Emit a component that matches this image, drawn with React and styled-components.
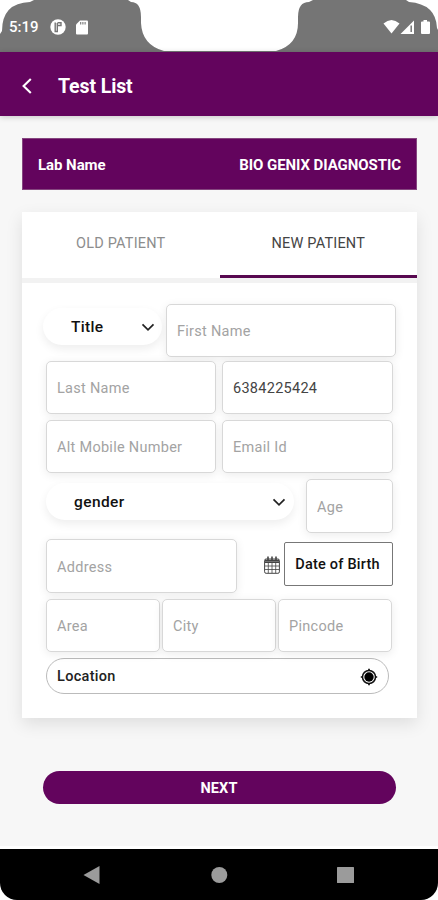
import styled, { createGlobalStyle } from "styled-components";

export default function App() {
  return (
    <>
      <GlobalStyle />
      <Phone>
        <StatusBar>
          <Clock>5:19</Clock>
          <PausedIcon />
          <CardIcon />
          <Signals />
        </StatusBar>
        <Header>
          <BackIcon />
          <Title>Test List</Title>
        </Header>
        <Content>
          <LabBar>
            <LabLabel>Lab Name</LabLabel>
            <LabValue>BIO GENIX DIAGNOSTIC</LabValue>
          </LabBar>
          <Card>
            <Tabs>
              <Tab>OLD PATIENT</Tab>
              <Tab $active>NEW PATIENT</Tab>
            </Tabs>
            <Form>
              <Row $height={53} $indent={-3}>
                <Select $width={119} $height={37} $pad={28} $end={7}>
                  <SelectText $spacing={0.3}>Title</SelectText>
                  <Chevron />
                </Select>
                <Field $width={230} $gap={4} placeholder="First Name" />
              </Row>
              <Row $height={53} $top={4}>
                <Field $width={170} placeholder="Last Name" />
                <Field $width={171} $gap={6} defaultValue="6384225424" />
              </Row>
              <Row $height={53} $top={6}>
                <Field $width={170} placeholder="Alt Mobile Number" />
                <Field $width={171} $gap={6} placeholder="Email Id" />
              </Row>
              <Row $height={54} $top={6}>
                <Select $width={248} $height={37} $pad={28} $end={8}>
                  <SelectText $spacing={0.4}>gender</SelectText>
                  <Chevron />
                </Select>
                <Field $width={87} $gap={12} placeholder="Age" />
              </Row>
              <Row $height={54} $top={6}>
                <Field $width={191} placeholder="Address" />
                <CalendarIcon />
                <DateButton>Date of Birth</DateButton>
              </Row>
              <Row $height={53} $top={6}>
                <Field $width={114} placeholder="Area" />
                <Field $width={114} $gap={2} placeholder="City" />
                <Field $width={114} $gap={2} placeholder="Pincode" />
              </Row>
              <Location>
                <span>Location</span>
                <TargetIcon />
              </Location>
            </Form>
          </Card>
          <NextButton>NEXT</NextButton>
        </Content>
        <NavBar>
          <svg width="438" height="51" fill="#9b9b9b">
            <path d="M83.500 26 L99.500 17 V35 Z" />
            <circle cx="219.300" cy="26" r="8" />
            <rect x="337" y="18" width="17" height="16" rx="0.500" />
          </svg>
        </NavBar>
      </Phone>
    </>
  );
}

function PausedIcon() {
  return (
    <svg width="16" height="16" viewBox="0 0 16 16">
      <circle cx="8" cy="8" r="7.700" fill="#fff" />
      <path
        d="M5.200 3.500 V12.500 H7.300 V4 M7.500 3.800 H11 V6.500 H8"
        fill="none"
        stroke="#757575"
        strokeWidth="1.400"
      />
    </svg>
  );
}

function CardIcon() {
  return (
    <SdCard width="12" height="15" viewBox="0 0 12 15">
      <path d="M4 0.500 H11 Q12 0.500 12 1.500 V13.500 Q12 14.500 11 14.500 H1 Q0 14.500 0 13.500 V4.500 Z" fill="#fff" />
      <path d="M4.700 2 V4.500 M6.900 2 V4.500 M9.100 2 V4.500" stroke="#757575" strokeWidth="1.100" />
    </SdCard>
  );
}

function Signals() {
  return (
    <SignalIcons width="48" height="16" viewBox="0 0 48 16" fill="#fff">
      <path d="M0.500 4.500 Q8.500 -2.500 16.500 4.500 L8.500 14.500 Z" />
      <path d="M17.500 15 L31 1.500 V15 Z" />
      <path d="M28.200 6.500 V13" stroke="#757575" strokeWidth="1.500" />
      <path d="M40.500 1 H44 V2.500 H46 Q47 2.500 47 3.500 V14 Q47 15 46 15 H39 Q38 15 38 14 V3.500 Q38 2.500 39 2.500 H40.500 Z" />
    </SignalIcons>
  );
}

function BackIcon() {
  return (
    <svg width="10" height="16" viewBox="0 0 10 16" fill="none" stroke="#fff" strokeWidth="2.100">
      <path d="M8.800 1 L1.600 8 L8.800 15" />
    </svg>
  );
}

function Chevron() {
  return (
    <svg width="14" height="9" viewBox="0 0 14 9" fill="none" stroke="#222" strokeWidth="1.700">
      <path d="M1.500 1.300 L7 6.900 L12.500 1.300" />
    </svg>
  );
}

function CalendarIcon() {
  return (
    <Calendar width="16" height="18" viewBox="0 0 16 18" fill="none" stroke="#444">
      <rect x="0.600" y="3" width="14.800" height="14.300" rx="1.500" strokeWidth="1" />
      <path d="M1 4.600 H15 M1 6.300 H15" strokeWidth="1.500" />
      <path d="M1 10 H15 M1 13.500 H15 M4.300 7 V17 M8 7 V17 M11.700 7 V17" strokeWidth="0.800" />
      <path d="M4 0.500 V4.500 M8 0.500 V4.500 M12 0.500 V4.500" strokeWidth="1.600" />
    </Calendar>
  );
}

function TargetIcon() {
  return (
    <svg width="18" height="18" viewBox="0 0 18 18" fill="none" stroke="#111">
      <circle cx="9" cy="9" r="4.700" fill="#000" stroke="none" />
      <circle cx="9" cy="9" r="6.500" strokeWidth="1.500" />
      <path d="M9 0.800 V3 M9 15 V17.200 M0.800 9 H3 M15 9 H17.200" strokeWidth="1.700" />
    </svg>
  );
}

const GlobalStyle = createGlobalStyle`
  * {
    box-sizing: border-box;
  }

  body {
    margin: 0;
    background: #fff;
    font-family: Roboto, "Liberation Sans", sans-serif;
  }
`;

const Phone = styled.div`
  width: 438px;
  height: 900px;
  display: flex;
  flex-direction: column;
  overflow: hidden;
  background: #fff;
`;

/* the clip cuts the rounded corners and the camera notch */
const StatusBar = styled.div`
  height: 52px;
  flex: none;
  display: flex;
  align-items: center;
  padding: 2px 8px 0 9px;
  color: #fff;
  background: #757575;
  clip-path: path(
    "M0 52 V34 L2 31 Q2 3 30 2 L34 0 H128 L131 2 Q141 2 141 17 V23 Q142 45 164 51 H276 Q298 45 298 23 V17 Q298 2 309 2 L313 0 H406 L409 2 Q436 4 437 28 L438 30 V52 Z"
  );
`;

const Clock = styled.span`
  width: 41px;
  font-size: 15px;
  font-weight: 500;
`;

const SdCard = styled.svg`
  margin-left: 10px;
`;

const SignalIcons = styled.svg`
  margin-left: auto;
  margin-right: -1px;
`;

const Header = styled.header`
  height: 64px;
  flex: none;
  display: flex;
  align-items: center;
  gap: 26px;
  padding: 4px 22px 0;
  color: #fff;
  background: #63045d;
  box-shadow: 0 1px 6px rgba(0, 0, 0, 0.2);
  z-index: 1;
`;

const Title = styled.h1`
  margin: 0;
  font-size: 19.5px;
  font-weight: 700;
  letter-spacing: -0.1px;
`;

const Content = styled.main`
  height: 730px;
  flex: none;
  padding: 22px 21px 0 22px;
  background: #f7f7f7;
`;

const LabBar = styled.div`
  height: 52px;
  display: flex;
  align-items: center;
  justify-content: space-between;
  padding: 2px 15px 0;
  color: #fff;
  background: #63045d;
  border: 1px solid #85467f;
  font-size: 15px;
  font-weight: 700;
`;

const LabLabel = styled.span`
  letter-spacing: -0.05px;
`;

const LabValue = styled.span`
  letter-spacing: -0.07px;
`;

const Card = styled.section`
  height: 506px;
  margin-top: 22px;
  background: #fff;
  box-shadow: 0 6px 16px rgba(0, 0, 0, 0.1);
`;

const Tabs = styled.div`
  height: 71px;
  display: flex;
  border-bottom: 5px solid #f2f2f2;
`;

const Tab = styled.div`
  width: 50%;
  display: flex;
  align-items: center;
  justify-content: center;
  color: ${({ $active }) => ($active ? "#444" : "#8d8d8d")};
  border-bottom: 3px solid ${({ $active }) => ($active ? "#580950" : "transparent")};
  font-size: 14.5px;
  letter-spacing: 0.2px;
`;

const Form = styled.div`
  padding: 21px 0 0 24px;
`;

const Row = styled.div`
  height: ${({ $height }) => $height}px;
  display: flex;
  margin-top: ${({ $top = 0 }) => $top}px;
  margin-left: ${({ $indent = 0 }) => $indent}px;
`;

const Field = styled.input`
  width: ${({ $width }) => $width}px;
  height: 100%;
  flex: none;
  margin: 0 0 0 ${({ $gap = 0 }) => $gap}px;
  padding: 2px 10px 0;
  border: 1px solid #d8d8d8;
  border-radius: 5px;
  outline: 0;
  color: #444;
  background: #fff;
  box-shadow: 0 2px 10px rgba(0, 0, 0, 0.08);
  font: 14.5px Roboto, sans-serif;
  letter-spacing: 0.28px;

  &::placeholder {
    color: #a3a3a3;
    opacity: 1;
  }
`;

const Select = styled.div`
  width: ${({ $width }) => $width}px;
  height: ${({ $height }) => $height}px;
  flex: none;
  display: flex;
  align-items: center;
  justify-content: space-between;
  margin-top: 4px;
  padding: 1px ${({ $end }) => $end}px 0 ${({ $pad }) => $pad}px;
  border-radius: 19px;
  background: #fff;
  box-shadow: 0 4px 10px rgba(0, 0, 0, 0.07);
`;

const SelectText = styled.span`
  color: #111;
  font-size: 15.5px;
  font-weight: 500;
  letter-spacing: ${({ $spacing }) => $spacing}px;
`;

const Calendar = styled.svg`
  margin: 17px 0 0 27px;
`;

const DateButton = styled.button`
  width: 109px;
  height: 44px;
  margin: 3px 0 0 4px;
  padding: 0 2px 0 0;
  border: 1px solid #777;
  border-radius: 2px;
  color: #111;
  background: #fff;
  font: 500 14.5px Roboto, sans-serif;
  letter-spacing: 0.22px;
`;

const Location = styled.div`
  width: 343px;
  height: 36px;
  display: flex;
  align-items: center;
  justify-content: space-between;
  margin-top: 6px;
  padding: 1px 10px 0;
  border: 1px solid #bbb;
  border-radius: 18px;
  color: #222;
  background: #fff;
  font-size: 14.5px;
  font-weight: 500;
  letter-spacing: 0.3px;
`;

const NextButton = styled.button`
  width: 353px;
  height: 33px;
  display: block;
  margin: 53px 0 0 21px;
  padding: 1px 1px 0 0;
  border: 0;
  border-radius: 17px;
  color: #fff;
  background: #63045d;
  font: 700 14.5px Roboto, sans-serif;
  letter-spacing: 0.1px;
`;

const NavBar = styled.footer`
  height: 51px;
  flex: none;
  margin-top: 3px;
  background: #000;
  border-radius: 0 0 17px 17px;
`;
